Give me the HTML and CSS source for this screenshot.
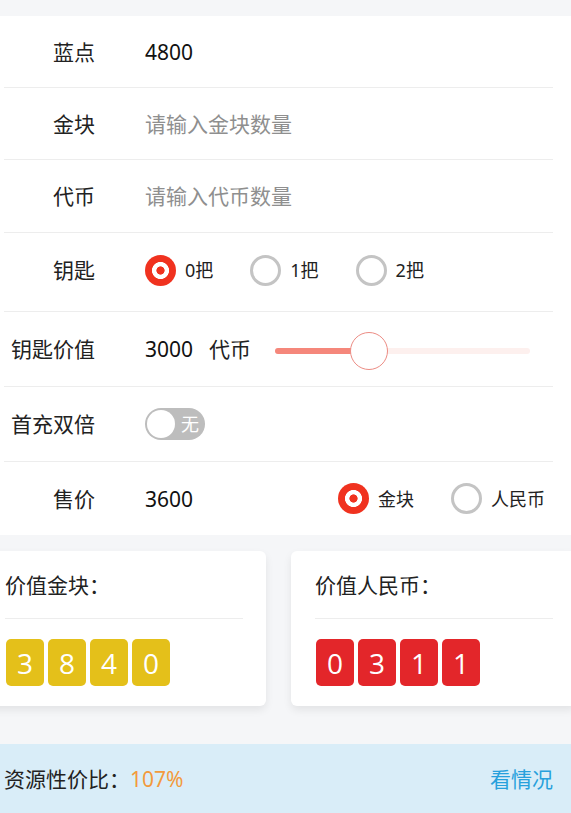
FILE: index.html
```html
<!DOCTYPE html>
<html lang="zh-CN">
<head>
<meta charset="utf-8">
<title>资源性价比</title>
<link rel="stylesheet" href="styles.css">
</head>
<body>
<div class="page">
  <div class="panel">
    <div class="row">
      <span class="label">蓝点</span>
      <span class="value">4800</span>
    </div>
    <div class="row">
      <span class="label">金块</span>
      <input class="value input" type="text" placeholder="请输入金块数量">
    </div>
    <div class="row row-tall">
      <span class="label">代币</span>
      <input class="value input" type="text" placeholder="请输入代币数量">
    </div>
    <div class="row row-key">
      <span class="label">钥匙</span>
      <div class="value radios">
        <label class="radio-item"><span class="radio checked"></span><span class="radio-text">0把</span></label>
        <label class="radio-item"><span class="radio"></span><span class="radio-text">1把</span></label>
        <label class="radio-item"><span class="radio"></span><span class="radio-text">2把</span></label>
      </div>
    </div>
    <div class="row row-mid">
      <span class="label">钥匙价值</span>
      <span class="value">3000</span>
      <span class="unit">代币</span>
      <div class="slider">
        <div class="slider-track">
          <div class="slider-fill" style="width:37%"></div>
          <span class="slider-thumb" style="left:37%"></span>
        </div>
      </div>
    </div>
    <div class="row row-mid">
      <span class="label">首充双倍</span>
      <div class="value">
        <span class="toggle"><span class="toggle-knob"></span><span class="toggle-text">无</span></span>
      </div>
    </div>
    <div class="row row-last">
      <span class="label">售价</span>
      <span class="value">3600</span>
      <div class="radios radios-right">
        <label class="radio-item"><span class="radio checked"></span><span class="radio-text">金块</span></label>
        <label class="radio-item"><span class="radio"></span><span class="radio-text">人民币</span></label>
      </div>
    </div>
  </div>

  <div class="cards">
    <div class="card">
      <div class="card-title">价值金块：</div>
      <div class="digits">
        <span class="digit gold">3</span><span class="digit gold">8</span><span class="digit gold">4</span><span class="digit gold">0</span>
      </div>
    </div>
    <div class="card">
      <div class="card-title">价值人民币：</div>
      <div class="digits">
        <span class="digit red">0</span><span class="digit red">3</span><span class="digit red">1</span><span class="digit red">1</span>
      </div>
    </div>
  </div>

  <div class="footer">
    <div class="ratio">资源性价比：<span class="ratio-num">107%</span></div>
    <a class="footer-link">看情况</a>
  </div>
</div>
</body>
</html>
```

FILE: styles.css
```css
* {
  box-sizing: border-box;
}

html, body {
  margin: 0;
  padding: 0;
}

body {
  background: #f5f6f8;
  font-family: "Noto Sans", "Noto Sans CJK SC", sans-serif;
  color: #222;
  overflow: hidden;
}

.page {
  width: 571px;
  padding-top: 16px;
}

.panel {
  background: #fff;
}

.row {
  display: flex;
  align-items: center;
  height: 72px;
  margin: 0 18px 0 4px;
  border-bottom: 1px solid #ededed;
}

.row-tall {
  height: 73px;
}

.row-key {
  height: 79px;
  padding-bottom: 4px;
}

.row-mid {
  height: 75px;
}

.row-last {
  height: 73px;
  border-bottom: none;
}

.label {
  width: 91px;
  flex-shrink: 0;
  text-align: right;
  font-size: 21px;
  line-height: 30px;
  color: #222;
}

.value {
  margin-left: 50px;
  font-size: 21px;
  line-height: 30px;
  color: #111;
}

.input {
  border: none;
  outline: none;
  padding: 0;
  background: transparent;
  font-family: inherit;
  width: 300px;
}

.input::placeholder {
  color: #8f8f8f;
}

.unit {
  margin-left: 16px;
  font-size: 21px;
  line-height: 30px;
  color: #222;
}

.radios {
  display: flex;
  align-items: center;
  gap: 37px;
}

.radios-right {
  margin-left: auto;
  margin-right: 8px;
}

.radio-item {
  display: flex;
  align-items: center;
  gap: 9px;
}

.radio {
  width: 31px;
  height: 31px;
  border-radius: 50%;
  border: 3px solid #c4c4c4;
  background: #fff;
}

.radio.checked {
  border: none;
  background: radial-gradient(circle, #f0321f 0 3.8px, #fff 4.4px 8.2px, #f0321f 8.8px);
}

.radio-text {
  font-size: 18px;
  line-height: 26px;
  color: #222;
}

.slider {
  flex: 1;
  margin: 3px 23px 0 24px;
  display: flex;
  align-items: center;
  height: 40px;
}

.slider-track {
  position: relative;
  width: 100%;
  height: 6px;
  border-radius: 3px;
  background: #fdf0ee;
}

.slider-fill {
  height: 100%;
  border-radius: 3px;
  background: #f5877b;
}

.slider-thumb {
  position: absolute;
  top: 50%;
  width: 38px;
  height: 38px;
  border-radius: 50%;
  background: #fff;
  border: 1px solid #ec8c84;
  transform: translate(-50%, -50%);
}

.toggle {
  display: flex;
  align-items: center;
  width: 60px;
  height: 32px;
  border-radius: 16px;
  background: #bdbdbd;
  padding: 0 2px;
  gap: 6px;
}

.toggle-knob {
  width: 28px;
  height: 28px;
  border-radius: 50%;
  background: #fff;
  flex-shrink: 0;
}

.toggle-text {
  color: #fff;
  font-size: 18px;
  line-height: 24px;
}

.cards {
  display: grid;
  grid-template-columns: 285px 285px;
  gap: 25px;
  margin-left: -19px;
  padding: 16px 0 38px;
}

.card {
  background: #fff;
  border-radius: 6px;
  padding: 0 23px 20px 24px;
  box-shadow: 0 4px 8px rgba(0, 0, 0, 0.08);
}

.card-title {
  padding: 18px 0 17px;
  font-size: 21px;
  line-height: 32px;
  color: #222;
  border-bottom: 1px solid #ededed;
}

.digits {
  display: flex;
  gap: 4px;
  margin-top: 20px;
  padding-left: 1px;
}

.digit {
  display: flex;
  align-items: center;
  justify-content: center;
  width: 38px;
  height: 47px;
  border-radius: 5px;
  color: #fff;
  font-family: "Open Sans", "Noto Sans", sans-serif;
  font-size: 28px;
}

.digit.gold {
  background: #e4c01a;
}

.digit.red {
  background: #e3262a;
}

.footer {
  display: flex;
  align-items: center;
  justify-content: space-between;
  height: 70px;
  padding: 0 18px 0 4px;
  background: #d9edf8;
}

.ratio {
  font-size: 21px;
  line-height: 30px;
  color: #222;
}

.ratio-num {
  color: #f39a3c;
}

.footer-link {
  font-size: 21px;
  line-height: 30px;
  color: #27a0dc;
}
```
